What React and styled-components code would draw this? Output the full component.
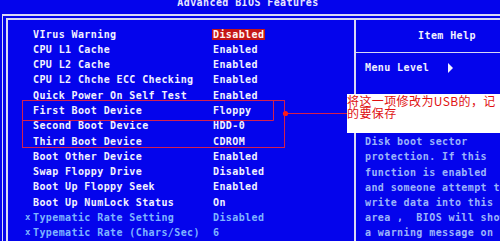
import styled, { createGlobalStyle } from 'styled-components';

const GlobalStyle = createGlobalStyle`
  html, body {
    margin: 0;
    padding: 0;
    background: #0404ec;
  }
`;

const bios = `"DejaVu Sans Mono", "Liberation Mono", monospace`;

const Screen = styled.div`
  position: relative;
  width: 500px;
  height: 241px;
  overflow: hidden;
  background: #0404ec;
  font-family: ${bios};
  font-size: 10px;
  font-weight: bold;
  letter-spacing: 0.4px;
  color: #f2f2ff;
`;

const TitleBar = styled.div`
  height: 14px;
  overflow: hidden;
  text-align: center;
`;

const TitleText = styled.div`
  margin-top: -4px;
  line-height: 14px;
  padding-right: 4px;
  color: #e8e8ff;
`;

const OuterFrame = styled.div`
  width: 530px;
  margin-left: 2px;
  border-top: 2px solid #d8d8f4;
  border-left: 1px solid #d8d8f4;
  padding: 2px 0 0 3px;
`;

const InnerFrame = styled.div`
  display: grid;
  grid-template-columns: 348px 1fr;
  border-top: 2px solid #d8d8f4;
  border-left: 2px solid #d8d8f4;
  height: 240px;
`;

const Settings = styled.div`
  padding-top: 6.5px;
  border-right: 2px solid #d8d8f4;
`;

const Row = styled.div`
  display: grid;
  grid-template-columns: 17px 8px 180px 1fr;
  line-height: 15.3px;
  height: 15.3px;
  color: ${p => (p.$locked ? '#7eb4ff' : '#f2f2ff')};
  white-space: nowrap;
`;

const Marker = styled.span`
  grid-column: 2;
  font-size: 9px;
`;

const Label = styled.span`
  grid-column: 3;
`;

const Value = styled.span`
  grid-column: 4;
`;

const Selected = styled.span`
  background: #c41616;
  color: #fff4f4;
  padding: 0 1px;
  margin-left: -1px;
`;

const HelpPanel = styled.div`
  display: flex;
  flex-direction: column;
`;

const HelpHeader = styled.div`
  height: 32px;
  line-height: 32px;
  text-align: center;
  border-bottom: 1px solid #d8d8f4;
  padding-left: 2px;
`;

const MenuLevel = styled.div`
  display: flex;
  align-items: center;
  margin-top: 7px;
  padding-left: 9px;
  line-height: 15.3px;
`;

const Arrow = styled.span`
  width: 0;
  height: 0;
  margin-left: 19px;
  border-left: 5px solid #f2f2ff;
  border-top: 5px solid transparent;
  border-bottom: 5px solid transparent;
`;

const HelpText = styled.div`
  margin-top: 58.8px;
  padding-left: 9px;
  line-height: 15.2px;
  color: #9cb4fa;
  white-space: pre;
`;

const Note = styled.div`
  position: absolute;
  left: 347px;
  top: 94px;
  width: 153px;
  height: 39px;
  background: #ffffff;
  color: #e01010;
  font-family: "Noto Sans CJK SC", sans-serif;
  font-weight: normal;
  letter-spacing: 0.4px;
  font-size: 12px;
  line-height: 12px;
  padding-top: 1px;
  box-sizing: border-box;
  white-space: nowrap;
`;

const Markup = styled.svg`
  position: absolute;
  left: 0;
  top: 0;
  pointer-events: none;
`;

const rows = [
  ['VIrus Warning', 'Disabled', 'selected'],
  ['CPU L1 Cache', 'Enabled'],
  ['CPU L2 Cache', 'Enabled'],
  ['CPU L2 Chche ECC Checking', 'Enabled'],
  ['Quick Power On Self Test', 'Enabled'],
  ['First Boot Device', 'Floppy'],
  ['Second Boot Device', 'HDD-0'],
  ['Third Boot Device', 'CDROM'],
  ['Boot Other Device', 'Enabled'],
  ['Swap Floppy Drive', 'Disabled'],
  ['Boot Up Floppy Seek', 'Enabled'],
  ['Boot Up NumLock Status', 'On'],
  ['Typematic Rate Setting', 'Disabled', 'locked'],
  ['Typematic Rate (Chars/Sec)', '6', 'locked'],
];

const help = [
  'Disk boot sector',
  'protection. If this',
  'function is enabled',
  'and someone attempt to',
  'write data into this',
  'area ,  BIOS will show',
  'a warning message on',
];

export default function App() {
  return (
    <Screen>
      <GlobalStyle />
      <TitleBar>
        <TitleText>Advanced BIOS Features</TitleText>
      </TitleBar>
      <OuterFrame>
        <InnerFrame>
          <Settings>
            {rows.map(([label, value, kind]) => (
              <Row key={label} $locked={kind === 'locked'}>
                {kind === 'locked' && <Marker>x</Marker>}
                <Label>{label}</Label>
                <Value>{kind === 'selected' ? <Selected>{value}</Selected> : value}</Value>
              </Row>
            ))}
          </Settings>
          <HelpPanel>
            <HelpHeader>Item Help</HelpHeader>
            <MenuLevel>
              Menu Level
              <Arrow />
            </MenuLevel>
            <HelpText>{help.join('\n')}</HelpText>
          </HelpPanel>
        </InnerFrame>
      </OuterFrame>

      {/* 红色标注框 */}
      <Markup width="500" height="241">
        <g fill="none" stroke="#d4204c" strokeWidth="1">
          <rect x="22.5" y="100.5" width="262" height="47" />
          <polyline points="22.5,120.5 273.5,120.5 273.5,100.5" />
          <line x1="285" y1="113.5" x2="347" y2="113.5" />
        </g>
        <circle cx="285.5" cy="113.5" r="2.6" fill="#ff1a1a" />
      </Markup>

      <Note>
        将这一项修改为USB的，记
        <br />
        的要保存
      </Note>
    </Screen>
  );
}
